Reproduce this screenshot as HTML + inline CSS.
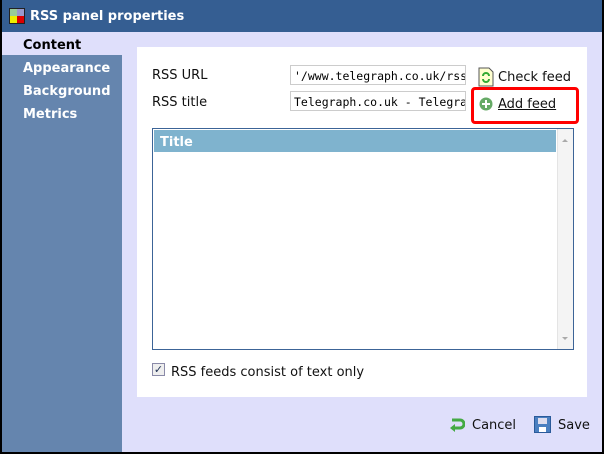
<!DOCTYPE html>
<html><head><style>
*{margin:0;padding:0;box-sizing:border-box}
body{width:604px;height:454px;background:#000;font-family:Verdana,"DejaVu Sans",sans-serif;font-size:13px;position:relative;overflow:hidden}
.win{position:absolute;left:2px;top:0;width:600px;height:452px;background:#dfdffb}
.tb{position:absolute;left:0;top:0;width:600px;height:32px;background:#355e92;color:#fff;font-weight:bold;font-size:13px}
.tb span{position:absolute;left:28px;top:9px}
.side{position:absolute;left:0;top:55px;width:120px;height:397px;background:#6585ae}
.nav{position:absolute;left:21px;font-weight:bold;font-size:13px;color:#fff}
.panel{position:absolute;left:137px;top:47px;width:450px;height:350px;background:#fff}
.lbl{position:absolute;color:#111}
.inp{position:absolute;left:290px;width:176px;height:20px;border:1px solid #ccc;font-family:"DejaVu Sans Mono","Liberation Mono",monospace;font-size:11.5px;padding:3px 3px 1px;white-space:nowrap;overflow:hidden}
.tbl{position:absolute;left:152px;top:128px;width:422px;height:222px;border:1px solid #3c6497;background:#fff}
.th{position:absolute;left:1px;top:1px;width:402px;height:22px;background:#7fb3ce;color:#fff;font-weight:bold;padding:5px 6px 0}
.sb{position:absolute;right:0;top:0;width:16px;height:220px;background:#f4f4f4;border-left:1px solid #e4e4e4}
</style></head><body>
<div class="win">
<div class="tb">
<svg style="position:absolute;left:7px;top:8px" width="16" height="16"><rect width="16" height="16" fill="#222"/><rect x="1" y="1" width="7" height="7" fill="#9c9"/><rect x="8" y="1" width="7" height="7" fill="#99c"/><rect x="1" y="8" width="7" height="7" fill="#ee0"/><rect x="8" y="8" width="7" height="7" fill="#d00"/></svg>
<span>RSS panel properties</span></div>
<div class="side"></div>
<div class="nav" style="top:38px;color:#000">Content</div>
<div class="nav" style="top:61px">Appearance</div>
<div class="nav" style="top:84px">Background</div>
<div class="nav" style="top:107px">Metrics</div>
</div>
<div class="panel"></div>
<div class="lbl" style="left:152px;top:68px">RSS URL</div>
<div class="lbl" style="left:152px;top:95px">RSS title</div>
<div class="inp" style="top:65px">'/www.telegraph.co.uk/rss</div>
<div class="inp" style="top:91px">Telegraph.co.uk - Telegraph</div>
<svg style="position:absolute;left:478px;top:67px" width="16" height="20"><path d="M1 1h10l4 4v14H1z" fill="#ffffd0" stroke="#555"/><path d="M5 9a3 3 0 0 1 6 0M11 12a3 3 0 0 1-6 0" stroke="#3a3" stroke-width="2" fill="none"/></svg>
<div class="lbl" style="left:498px;top:70px">Check feed</div>
<div style="position:absolute;left:471px;top:87px;width:108px;height:37px;border:3px solid #f00;border-radius:4px"></div>
<svg style="position:absolute;left:479px;top:97px" width="14" height="14"><circle cx="7" cy="7" r="6.5" fill="#6a6"/><path d="M7 3v8M3 7h8" stroke="#fff" stroke-width="2"/></svg>
<div class="lbl" style="left:498px;top:97px;text-decoration:underline">Add feed</div>
<div class="tbl"><div class="th">Title</div><div class="sb"><div style="position:absolute;left:4px;top:7px;border:3px solid transparent;border-bottom-color:#aaa"></div><div style="position:absolute;left:4px;top:208px;border:3px solid transparent;border-top-color:#aaa"></div></div></div>
<div style="position:absolute;left:152px;top:363px;width:13px;height:13px;border:1px solid #8a8aa8;background:#eee;color:#235;font-size:11px;line-height:11px;text-align:center">✓</div>
<div class="lbl" style="left:171px;top:365px">RSS feeds consist of text only</div>
<svg style="position:absolute;left:449px;top:416px" width="16" height="16"><path d="M3 4h8a4 4 0 0 1 0 8H4" stroke="#4a4" stroke-width="3" fill="none"/><path d="M1 12l5-4v8z" fill="#4a4"/></svg>
<div class="lbl" style="left:472px;top:418px">Cancel</div>
<svg style="position:absolute;left:534px;top:416px" width="17" height="17"><rect x=".5" y=".5" width="16" height="16" fill="#4a7fc0" stroke="#2a5a9a"/><rect x="4" y="2" width="9" height="6" fill="#dde"/><rect x="5" y="11" width="7" height="5" fill="#fff"/></svg>
<div class="lbl" style="left:558px;top:418px">Save</div>
</body></html>
